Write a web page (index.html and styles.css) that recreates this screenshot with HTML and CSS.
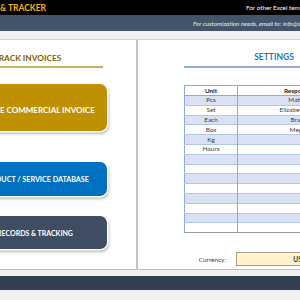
FILE: index.html
```html
<!DOCTYPE html>
<html>
<head>
<meta charset="utf-8">
<link rel="stylesheet" href="styles.css">
</head>
<body>
<div class="page">
  <header class="topbar">
    <span class="title">&amp; TRACKER</span>
    <span class="more">For other Excel templates, visit our website</span>
  </header>
  <div class="subbar">
    <span class="contact">For customization needs, email to: info@someka.net</span>
  </div>
  <div class="band band-top"></div>
  <main class="sheet">
    <section class="left">
      <h2 class="sec-title">TRACK INVOICES</h2>
      <div class="btn btn-gold">CREATE COMMERCIAL INVOICE</div>
      <div class="btn btn-blue">PRODUCT / SERVICE DATABASE</div>
      <div class="btn btn-slate">RECORDS &amp; TRACKING</div>
    </section>
    <section class="right">
      <h2 class="set-title">SETTINGS</h2>
      <table class="units">
        <thead>
          <tr><th class="c1">Unit</th><th class="c2">Responsible</th></tr>
        </thead>
        <tbody>
          <tr><td>Pcs</td><td>Matthew</td></tr>
          <tr><td>Set</td><td>Elizabeth Jones</td></tr>
          <tr><td>Each</td><td>Bradley</td></tr>
          <tr><td>Box</td><td>Meghan</td></tr>
          <tr><td>Kg</td><td></td></tr>
          <tr><td>Hours</td><td></td></tr>
          <tr><td></td><td></td></tr>
          <tr><td></td><td></td></tr>
          <tr><td></td><td></td></tr>
          <tr><td></td><td></td></tr>
          <tr><td></td><td></td></tr>
          <tr><td></td><td></td></tr>
          <tr><td></td><td></td></tr>
          <tr><td></td><td></td></tr>
        </tbody>
      </table>
      <div class="currency">
        <span class="cur-label">Currency:</span>
        <span class="cur-input">USD</span>
      </div>
    </section>
  </main>
  <div class="band band-bottom"></div>
  <footer class="footbar"></footer>
  <div class="band band-tail"></div>
</div>
</body>
</html>
```
FILE: styles.css
```css
* { box-sizing: border-box; }
html, body { margin: 0; padding: 0; }
body {
  width: 300px;
  height: 300px;
  overflow: hidden;
  background: #f0f0f0;
  font-family: Lato, "Liberation Sans", sans-serif;
}
.page { width: 300px; overflow: hidden; }

.topbar {
  height: 15px;
  background: #000;
  display: flex;
  align-items: center;
  white-space: nowrap;
  overflow: hidden;
}
.title {
  color: #f2b600;
  font-weight: 700;
  font-size: 8.5px;
  width: 246px;
  flex-shrink: 0;
}
.more {
  color: #fff;
  font-size: 6.3px;
  flex-shrink: 0;
}
.subbar {
  height: 16px;
  background: #44546a;
  display: flex;
  align-items: center;
  padding-left: 193px;
  white-space: nowrap;
  overflow: hidden;
}
.contact {
  color: #e8ecf2;
  font-style: italic;
  font-size: 6.3px;
  flex-shrink: 0;
}
.band { background: #f0f0f0; }
.band-top { height: 9px; border-bottom: 1px solid #d4d4d4; }
.band-bottom { height: 7px; border-top: 1px solid #bdbdbd; }
.band-tail { height: 10px; }
.footbar { height: 14px; background: #333f50; }

.sheet {
  display: flex;
  height: 229px;
  background: #fff;
}
.left {
  width: 138px;
  flex-shrink: 0;
  border-right: 2px solid #c4c4c4;
  display: flex;
  flex-direction: column;
  align-items: flex-end;
  overflow: hidden;
  padding-right: 29px;
}
.sec-title {
  margin: 0;
  width: 151px;
  flex-shrink: 0;
  margin-right: 4px;
  padding-top: 13px;
  padding-bottom: 3px;
  text-align: center;
  font-size: 8.3px;
  line-height: 10px;
  font-weight: 700;
  color: #7f6000;
  border-bottom: 2px solid #cbb060;
}
.btn {
  width: 144px;
  flex-shrink: 0;
  display: flex;
  align-items: center;
  justify-content: center;
  color: #fff;
  font-weight: 700;
  white-space: nowrap;
  border-radius: 7px;
  box-shadow: 0 0 0 1.5px #fff, 1px 2px 3px 1px rgba(0, 0, 0, 0.28);
}
.btn-gold {
  margin-top: 16px;
  height: 47px;
  background: #bf9000;
  font-size: 8px;
  padding-top: 5px;
}
.btn-blue {
  margin-top: 31px;
  height: 34px;
  background: #0070c0;
  font-size: 7.2px;
}
.btn-slate {
  margin-top: 20px;
  height: 33px;
  background: #3f4c62;
  font-size: 7px;
}

.right {
  flex: 1;
  overflow: hidden;
  padding-left: 46px;
}
.set-title {
  margin: 0;
  width: 180px;
  padding-top: 12px;
  padding-bottom: 4px;
  text-align: center;
  font-size: 8.5px;
  line-height: 10px;
  font-weight: 700;
  color: #2f75b5;
  border-bottom: 2px solid #8faadc;
}
.units {
  margin-top: 17px;
  width: 180px;
  border-collapse: collapse;
  table-layout: fixed;
  font-size: 6.4px;
  color: #404040;
  border-left: 1px solid #8ea9db;
  border-top: 1px solid #8ea9db;
  border-bottom: 1px solid #9a9a9a;
}
.units .c1 { width: 53px; }
.units th {
  height: 10px;
  padding: 0;
  font-weight: 700;
  color: #222;
  background: #fff;
  border-bottom: 1px solid #8ea9db;
}
.units td {
  height: 9.8px;
  padding: 0;
  text-align: center;
  white-space: nowrap;
  overflow: hidden;
  border-top: 1px solid #b4c6e7;
  line-height: 8px;
}
.units th:first-child, .units td:first-child { border-right: 1px solid #8ea9db; }
.units tbody tr:nth-child(odd) td { background: #d9e1f2; }

.currency {
  margin-top: 19px;
  display: flex;
  align-items: center;
  width: 180px;
}
.cur-label {
  width: 52px;
  padding-right: 10px;
  text-align: right;
  font-size: 6.4px;
  color: #404040;
}
.cur-input {
  width: 128px;
  height: 14px;
  background: #fff2cc;
  border: 1px solid #a59f8c;
  font-size: 6.6px;
  font-weight: 700;
  color: #333;
  display: flex;
  align-items: center;
  justify-content: center;
}
```
